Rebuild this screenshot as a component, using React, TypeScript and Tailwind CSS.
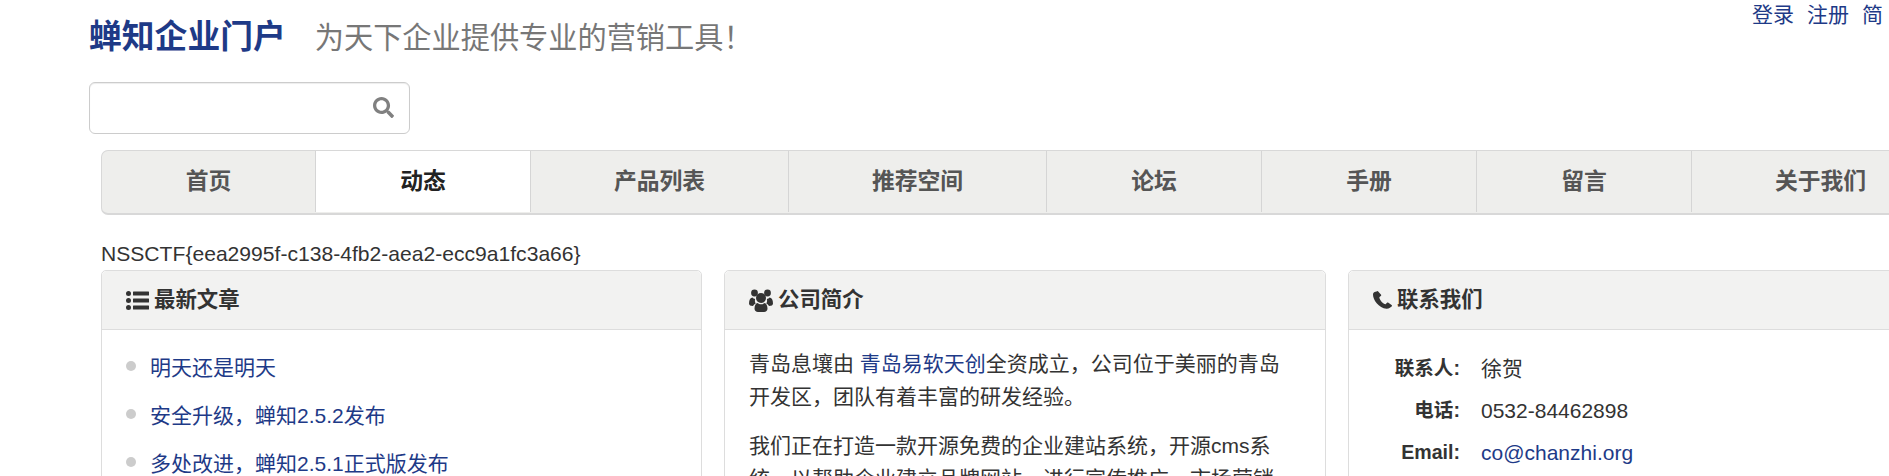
import React from 'react';
import { FaSearch } from 'react-icons/fa';

const NAV_ITEMS = ['首页', '动态', '产品列表', '推荐空间', '论坛', '手册', '留言', '关于我们'];
const ARTICLES = ['明天还是明天', '安全升级，蝉知2.5.2发布', '多处改进，蝉知2.5.1正式版发布'];

const ListIcon = () => (
  <svg viewBox="0 0 23 19" className="w-[23px] h-[19px]" fill="currentColor">
    <circle cx="2.5" cy="2.5" r="2.5" />
    <circle cx="2.5" cy="9.5" r="2.5" />
    <circle cx="2.5" cy="16.5" r="2.5" />
    <rect x="7" y="0.5" width="16" height="4" rx="0.5" />
    <rect x="7" y="7.5" width="16" height="4" rx="0.5" />
    <rect x="7" y="14.5" width="16" height="4" rx="0.5" />
  </svg>
);

const UsersIcon = () => (
  <svg viewBox="0 0 24 23" className="w-[24px] h-[23px]" fill="currentColor">
    <circle cx="5.5" cy="4" r="3.4" />
    <circle cx="18.5" cy="4" r="3.4" />
    <path d="M0 14.5C0 10.5 1.5 8.5 3.5 8.5c.8 1 1.6 1.4 2.6 1.5-.4 1.8-.2 3.2.6 4.6-1.2.6-2.1 1.4-2.7 2.4C1.5 17 0 16.2 0 14.5Z" />
    <path d="M24 14.5c0-4-1.5-6-3.5-6-.8 1-1.6 1.4-2.6 1.5.4 1.8.2 3.2-.6 4.6 1.2.6 2.1 1.4 2.7 2.4 2.5 0 4-.8 4-2.5Z" />
    <circle cx="12" cy="9" r="5" />
    <path d="M5.5 19.5c0-3 1.3-5.2 3-5.5 1 .9 2.2 1.3 3.5 1.3s2.5-.4 3.5-1.3c1.700.3 3 2.500 3 5.500 0 2.200-1.500 3.500-3.500 3.500h-6c-2 0-3.500-1.300-3.500-3.500Z" />
  </svg>
);

const PhoneIcon = () => (
  <svg viewBox="0 0 19 18" className="w-[19px] h-[18px]" fill="currentColor">
    <path d="M4.300.2 1.600 1.100C.5 1.600 0 2.600 0 3.800c0 2.600 1.500 6 3.700 8.500 2.500 2.800 6 5.200 9.700 5.500 1.300.1 2.500-.3 3.500-1l1.700-1.300c.5-.5.5-1.100 0-1.500l-3.200-2.300c-.5-.3-1-.3-1.400.1l-1.200 1.200c-.4.300-.8.300-1.200.1-1.300-.8-2.700-2-3.600-3.200-.7-.9-1.300-2-1.600-3-.1-.4 0-.8.400-1.100l1-.8c.4-.4.500-.8.300-1.300L5.400.7C5.100.2 4.800 0 4.300.2Z" />
  </svg>
);

const Panel: React.FC<{ icon: React.ReactNode; title: string; width: string; children: React.ReactNode }> = ({ icon, title, width, children }) => (
  <div className={`${width} h-[300px] shrink-0 rounded-t-[5px] border border-[#dddddd] bg-white`}>
    <div className="h-[59px] px-[24px] flex items-center gap-[5px] bg-[#f2f2f1] border-b border-[#dddddd] rounded-t-[5px] text-[21.4px] font-bold text-[#333333]">
      {icon}
      <span>{title}</span>
    </div>
    {children}
  </div>
);

export default function App() {
  return (
    <div className="w-[1889px] h-[476px] overflow-hidden bg-white text-[#333333] font-['Liberation_Sans','Noto_Sans_CJK_SC',sans-serif]">
      <div className="relative w-[2040px] pl-[89px]">
        {/* top links run up to the window edge */}
        <div className="absolute top-0 left-[1752px] flex gap-[13px] text-[21px] leading-[30px] text-[#1e3a87] whitespace-nowrap">
          <a>登录</a>
          <a>注册</a>
          <a>简</a>
        </div>

        <div className="h-[82px] flex items-baseline gap-[29px] pt-[14px]">
          <span className="text-[32.8px] leading-[46px] font-bold text-[#1e3a87]">蝉知企业门户</span>
          <span className="text-[29.2px] leading-[46px] text-[#777777]">为天下企业提供专业的营销工具！</span>
        </div>

        <div className="w-[321px] h-[52px] flex items-center justify-end pr-[15px] rounded-[6px] border border-[#cccccc] shadow-[inset_0_1px_1px_rgba(0,0,0,0.075)]">
          <FaSearch className="w-[21px] h-[21px] text-[#808080] -translate-y-[1px]" />
        </div>

        <div className="ml-[12px] mt-[16px] flex w-[1870px] h-[65px] rounded-[7px] border border-b-2 border-[#d8d8d8] bg-[#eeeeec]">
          {NAV_ITEMS.map((item, idx) => (
            <div
              key={item}
              className={`h-[61px] flex items-center justify-center whitespace-nowrap text-[22.8px] font-bold border-r border-[#d5d5d5] ${
                item.length === 4 ? 'w-[258px]' : idx === 0 ? 'w-[214px]' : 'w-[215px]'
              } ${idx === 1 ? 'bg-white text-[#222222]' : 'text-[#555555]'}`}
            >
              {item}
            </div>
          ))}
        </div>

        <div className="ml-[12px] mt-[22px] text-[21.1px] leading-[33px] h-[33px] whitespace-nowrap">
          NSSCTF{'{'}eea2995f-c138-4fb2-aea2-ecc9a1fc3a66{'}'}
        </div>

        <div className="ml-[12px] flex gap-[22px]">
          <Panel icon={<ListIcon />} title="最新文章" width="w-[601px]">
            <ul className="pt-[14px] pl-[24px]">
              {ARTICLES.map((a) => (
                <li key={a} className="h-[48px] flex items-center gap-[14px] text-[21px] text-[#1e3a87]">
                  <span className="w-[10px] h-[10px] rounded-full bg-[#cccccc] -translate-y-[2px]" />
                  <a>{a}</a>
                </li>
              ))}
            </ul>
          </Panel>

          <Panel icon={<UsersIcon />} title="公司简介" width="w-[602px]">
            <div className="pl-[24px] pr-[30px] pt-[17px] text-[21px] leading-[33px]">
              <p className="mb-[16px]">
                青岛息壤由 <a className="text-[#1e3a87]">青岛易软天创</a>全资成立，公司位于美丽的青岛开发区，团队有着丰富的研发经验。
              </p>
              <p>我们正在打造一款开源免费的企业建站系统，开源cms系统，以帮助企业建立品牌网站，进行宣传推广，市场营销</p>
            </div>
          </Panel>

          <Panel icon={<PhoneIcon />} title="联系我们" width="w-[601px]">
            <dl className="pt-[18px] grid grid-cols-[111px_1fr] gap-x-[21px] auto-rows-[42px] items-center">
              <dt className="font-bold text-right text-[19.6px]">联系人:</dt>
              <dd className="text-[21px]">徐贺</dd>
              <dt className="font-bold text-right text-[19.6px]">电话:</dt>
              <dd className="text-[21px]">0532-84462898</dd>
              <dt className="font-bold text-right text-[19.6px]">Email:</dt>
              <dd className="text-[21px] text-[#1e3a87]">co@chanzhi.org</dd>
            </dl>
          </Panel>
        </div>
      </div>
    </div>
  );
}
